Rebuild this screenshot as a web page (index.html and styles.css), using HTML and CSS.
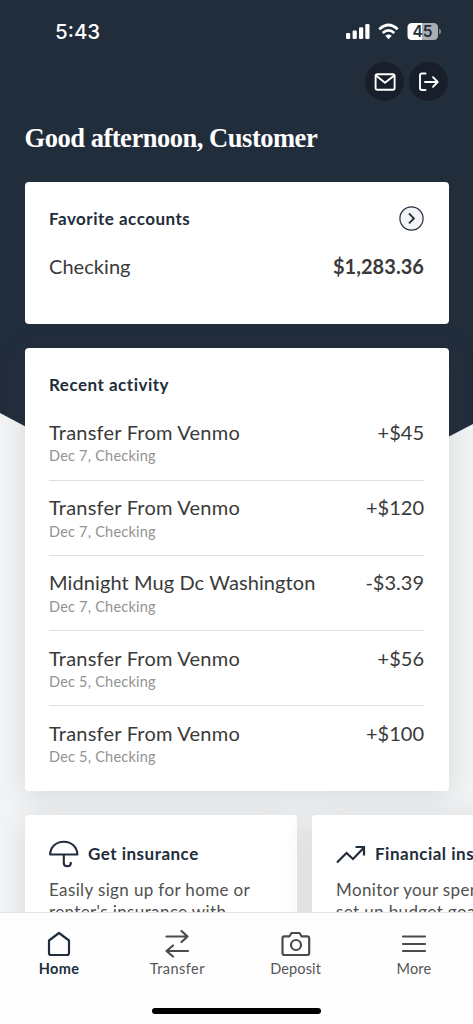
FILE: index.html
```html
<!DOCTYPE html>
<html lang="en">
<head>
<meta charset="utf-8">
<title>Home</title>
<link rel="stylesheet" href="styles.css">
</head>
<body>
<div class="app">
  <svg class="backdrop" viewBox="0 0 473 480" aria-hidden="true"><path d="M0 0H473V424L449 436.500Q330 478 230 478Q130 478 24.500 426L0 413Z" fill="#222d3c"/></svg>
  <div class="status">
    <span class="clock">5:43</span>
    <svg class="signals" width="96" height="20" viewBox="345 22 96 20" fill="#fff">
      <rect x="346" y="33" width="4.200" height="6" rx="1.200"/><rect x="352.600" y="30.500" width="4.200" height="8.500" rx="1.200"/><rect x="359" y="27.300" width="4.200" height="11.700" rx="1.200"/><rect x="365.300" y="24" width="4.200" height="15" rx="1.200"/>
      <g fill="none" stroke="#fff" stroke-width="2.700"><path d="M379.300 29.200Q388.500 20.800 397.700 29.200"/><path d="M382.700 32.900Q388.500 27.900 394.300 32.900"/></g>
      <path d="M385.300 35.800Q388.500 33 391.700 35.800L388.500 39.200Z"/>
      <path d="M412 23H422V40H412Q407.500 40 407.500 35.500V27.500Q407.500 23 412 23Z"/><path fill="#a9adb2" d="M422 23H433.500Q438 23 438 27.500V35.500Q438 40 433.500 40H422Z"/><path fill="#8b9198" d="M439.200 28.500Q441 29.500 441 31.500T439.200 34.500Z"/>
      <text x="422.500" y="37.300" text-anchor="middle" class="battery">45</text>
    </svg>
  </div>
  <div class="actions">
    <button class="round" aria-label="Messages"><svg width="24" height="24" viewBox="0 0 24 24"><rect x="2.600" y="4.200" width="19" height="15.500" rx="1.800"/><path d="M3 5.500L12 12.800L21.200 5.500"/></svg></button>
    <button class="round" aria-label="Log out"><svg width="24" height="24" viewBox="0 0 24 24"><path d="M8.500 3.500H5Q3 3.500 3 5.500V18Q3 20 5 20H8.500M8 12H20.500M16 7.200L20.700 12L16 16.800"/></svg></button>
  </div>
  <h1 class="greeting">Good afternoon, Customer</h1>
  <section class="card favorites">
    <div class="line"><h2>Favorite accounts</h2><svg width="25" height="25" viewBox="0 0 25 25"><circle cx="12.500" cy="12.500" r="11.600" fill="#f3f4f6" stroke="#222d3c" stroke-width="1.200"/><path d="M10 7.500L14.900 12.400L10 17.300" fill="none" stroke="#222d3c" stroke-width="1.800"/></svg></div>
    <div class="line account"><span>Checking</span><b>$1,283.36</b></div>
  </section>
  <section class="card recent">
    <h2>Recent activity</h2>
    <ul>
      <li><div class="line"><span class="payee">Transfer From Venmo</span><span>+$45</span></div><small>Dec 7, Checking</small></li>
      <li><div class="line"><span class="payee">Transfer From Venmo</span><span>+$120</span></div><small>Dec 7, Checking</small></li>
      <li><div class="line"><span class="payee long">Midnight Mug Dc Washington</span><span>-$3.39</span></div><small>Dec 7, Checking</small></li>
      <li><div class="line"><span class="payee">Transfer From Venmo</span><span>+$56</span></div><small>Dec 5, Checking</small></li>
      <li><div class="line"><span class="payee">Transfer From Venmo</span><span>+$100</span></div><small>Dec 5, Checking</small></li>
    </ul>
  </section>
  <div class="promos">
    <section class="card promo">
      <div class="title"><svg width="30" height="30" viewBox="0 0 30 30"><path d="M1.100 15.500C1.500 8 7 2.700 14.800 2.700S28 8 28.400 15.500ZM14.800 15.500V24Q14.800 27.300 18.300 27.300T21.800 24V23" fill="none" stroke="#222d3c" stroke-width="2.100" stroke-linejoin="round"/></svg><h2>Get insurance</h2></div>
      <p>Easily sign up for home or<br>renter's insurance with</p>
    </section>
    <section class="card promo">
      <div class="title"><svg width="30" height="30" viewBox="0 0 30 30"><path d="M1 23.500L10.500 14L17 20L28 8.500M19.500 8H28V16.500" fill="none" stroke="#222d3c" stroke-width="2.200"/></svg><h2>Financial insights</h2></div>
      <p>Monitor your spending,<br>set up budget goals</p>
    </section>
  </div>
  <nav class="tabs">
    <a class="tab on"><svg width="30" height="30" viewBox="0 0 30 30"><path d="M5 11.500L15 4L25 11.500V24Q25 26 23 26H7Q5 26 5 24Z"/></svg><span>Home</span></a>
    <a class="tab"><svg width="30" height="30" viewBox="0 0 30 30"><path d="M4.500 7.500H25.500M19.500 2L25.500 7.500L19.500 13M26 22H4.500M11 16.500L4.500 22L11 27.500"/></svg><span class="spaced">Transfer</span></a>
    <a class="tab"><svg width="30" height="30" viewBox="0 0 30 30"><path d="M3 7.300H8.500L10.500 4H18.500L20.500 7.300H26Q28.200 7.300 28.200 9.500V24Q28.200 26 26 26H3.500Q1.500 26 1.500 24V9Q1.500 7.300 3.500 7.300Z"/><circle cx="15" cy="16" r="5"/></svg><span>Deposit</span></a>
    <a class="tab"><svg width="30" height="30" viewBox="0 0 30 30"><path d="M4 7.500H26M4 15H26M4 22H26"/></svg><span>More</span></a>
    <i class="home-bar"></i>
  </nav>
</div>
</body>
</html>
```
FILE: styles.css
```css
* { box-sizing: border-box; margin: 0; padding: 0; }
body { background: #f3f4f6; font-family: Lato, "Noto Sans", sans-serif; color: #3a3a3a; font-variant-ligatures: none; }
.app { position: relative; height: 1024px; overflow: hidden; display: flex; flex-direction: column; isolation: isolate; }
.app > * { flex: none; }
.backdrop { position: absolute; top: 0; left: 0; width: 473px; height: 480px; z-index: -1; }
.status { height: 62px; padding: 21px 32px 0 55px; display: flex; justify-content: space-between; color: #fff; }
.clock { font: 500 20.500px/22px Inter, sans-serif; }
.signals { display: block; margin-top: 1px; }
.battery { font: 600 15.500px Inter, sans-serif; fill: #222d3c; }
.actions { display: flex; justify-content: flex-end; gap: 5px; padding-right: 25px; height: 39px; }
.round { width: 39px; height: 39px; border: 0; border-radius: 50%; background: #181f2a; display: grid; place-items: center; }
.round svg { fill: none; stroke: #fff; stroke-width: 1.900; stroke-linejoin: round; stroke-linecap: round; }
.greeting { height: 81px; padding: 21px 0 0 24.500px; font: bold 26.500px/32px "Liberation Serif", serif; letter-spacing: -.47px; color: #fff; white-space: nowrap; }
.card { background: #fff; border-radius: 4px; margin: 0 24.500px; padding: 23.500px 24.500px; box-shadow: 0 4px 30px rgba(50, 62, 58, .15); }
h2 { font: bold 17px/25px Lato, sans-serif; letter-spacing: .5px; color: #222d3c; white-space: nowrap; }
.line { display: flex; justify-content: space-between; white-space: nowrap; }
.favorites { height: 141.500px; box-shadow: none; }
.account { margin-top: 22.500px; font-size: 20px; line-height: 26px; letter-spacing: .05px; }
.recent { height: 442.500px; margin-top: 24.500px; }
.recent ul { list-style: none; margin-top: 9.200px; }
.recent li { height: 75.200px; border-bottom: 1px solid #dedfe1; padding-top: 13.300px; font-size: 20px; line-height: 26px; }
.recent li:last-child { border: 0; }
.payee { letter-spacing: .22px; }
.long { letter-spacing: .1px; }
small { display: block; width: max-content; font-size: 14.500px; line-height: 20px; letter-spacing: .22px; margin-top: 1.500px; color: #929292; }
.promos { display: grid; grid-template-columns: 272px 272px; gap: 15px; margin: 24.500px 0 0 24.500px; }
.promo { margin: 0; height: 240px; white-space: nowrap; }
.title { display: flex; align-items: center; gap: 9px; height: 30px; }
.promo p { margin-top: 10px; font-size: 17px; line-height: 22px; letter-spacing: .37px; color: #505050; }
.tabs { position: absolute; left: 0; bottom: 0; width: 100%; height: 112px; padding-top: 16px; background: #fefefe; border-top: 1px solid #e4e4e5; display: grid; grid-template-columns: repeat(4, 1fr); align-items: start; }
.tab { display: flex; flex-direction: column; align-items: center; font-size: 14.500px; line-height: 20px; letter-spacing: .15px; color: #555; }
.spaced { letter-spacing: .45px; }
.tab svg { fill: none; stroke: #4b4b4b; stroke-width: 2.200; stroke-linejoin: round; stroke-linecap: round; }
.on { font-weight: bold; color: #222d3c; }
.on span { letter-spacing: .4px; }
.on svg { stroke: #222d3c; }
.home-bar { position: absolute; left: 152px; bottom: 10px; width: 169px; height: 6px; border-radius: 3px; background: #000; }
```
